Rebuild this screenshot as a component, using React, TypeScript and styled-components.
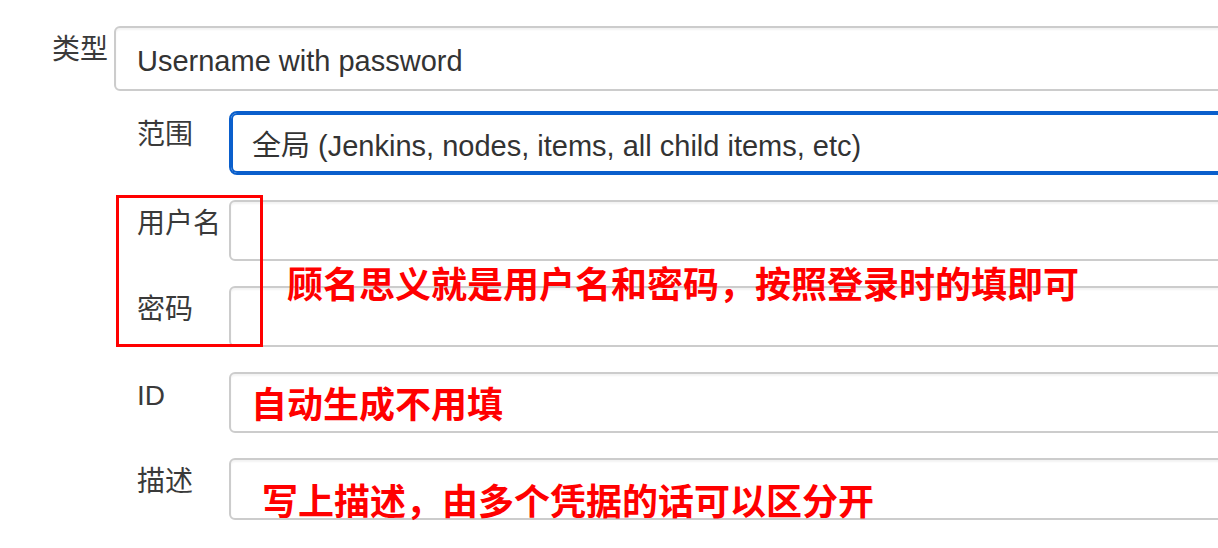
import React from "react";
import styled, { createGlobalStyle } from "styled-components";

const GlobalStyle = createGlobalStyle`
    html, body {
        margin: 0;
        padding: 0;
        background: #ffffff;
        overflow: hidden;
    }
`;

const Page = styled.div`
    position: relative;
    width: 1260px;
    height: 548px;
    padding-top: 26px;
    box-sizing: border-box;
    font-family: "Liberation Sans", "Noto Sans CJK SC", sans-serif;
    color: #333333;
`;

const Row = styled.div<{ $label: number }>`
    display: grid;
    grid-template-columns: ${(p) => p.$label}px 1fr;
    align-items: start;
`;

const TopRow = styled(Row)`
    padding-left: 52px;
`;

const Nested = styled.div`
    display: flex;
    flex-direction: column;
    gap: 25px;
    margin-top: 20px;
    padding-left: 137px;
`;

const Label = styled.div`
    font-size: 28px;
    line-height: 40px;
    padding-top: 4px;
    white-space: nowrap;
    color: #3a3a3a;
`;

const Field = styled.div<{ $h: number; $focused?: boolean }>`
    height: ${(p) => p.$h}px;
    box-sizing: border-box;
    display: flex;
    align-items: center;
    padding: 0 21px;
    border: 2px solid ${(p) => (p.$focused ? "#0a5fcc" : "#cccccc")};
    border-radius: ${(p) => (p.$focused ? 8 : 6)}px;
    box-shadow: ${(p) =>
        p.$focused
            ? "inset 0 0 0 2px #0a5fcc"
            : "inset 0 2px 2px rgba(0, 0, 0, 0.05)"};
    font-size: 29px;
    color: #333333;
    white-space: nowrap;
    overflow: hidden;
`;

const TypeField = styled(Field)`
    padding-top: 5px;
`;

// red annotations drawn over the form
const Frame = styled.div`
    position: absolute;
    left: 116px;
    top: 195px;
    width: 147px;
    height: 152px;
    box-sizing: border-box;
    border: 3px solid #ff0000;
`;

const Note = styled.div<{ $x: number; $y: number }>`
    position: absolute;
    left: ${(p) => p.$x}px;
    top: ${(p) => p.$y}px;
    font-family: "Noto Sans CJK SC", sans-serif;
    font-weight: 700;
    font-size: 36px;
    line-height: 36px;
    color: #ff0000;
    white-space: nowrap;
`;

const rows = [
    { label: "范围", value: "全局 (Jenkins, nodes, items, all child items, etc)", h: 64, focused: true },
    { label: "用户名", value: "", h: 61 },
    { label: "密码", value: "", h: 61 },
    { label: "ID", value: "", h: 61 },
    { label: "描述", value: "", h: 62 },
];

export default function App() {
    return (
        <>
            <GlobalStyle />
            <Page>
                <TopRow $label={62}>
                    <Label>类型</Label>
                    <TypeField $h={65}>Username with password</TypeField>
                </TopRow>
                <Nested>
                    {rows.map((r) => (
                        <Row key={r.label} $label={92}>
                            <Label>{r.label}</Label>
                            <Field $h={r.h} $focused={r.focused}>
                                {r.value}
                            </Field>
                        </Row>
                    ))}
                </Nested>
                <Frame />
                <Note $x={287} $y={264}>顾名思义就是用户名和密码，按照登录时的填即可</Note>
                <Note $x={251} $y={384}>自动生成不用填</Note>
                <Note $x={262} $y={481}>写上描述，由多个凭据的话可以区分开</Note>
            </Page>
        </>
    );
}
